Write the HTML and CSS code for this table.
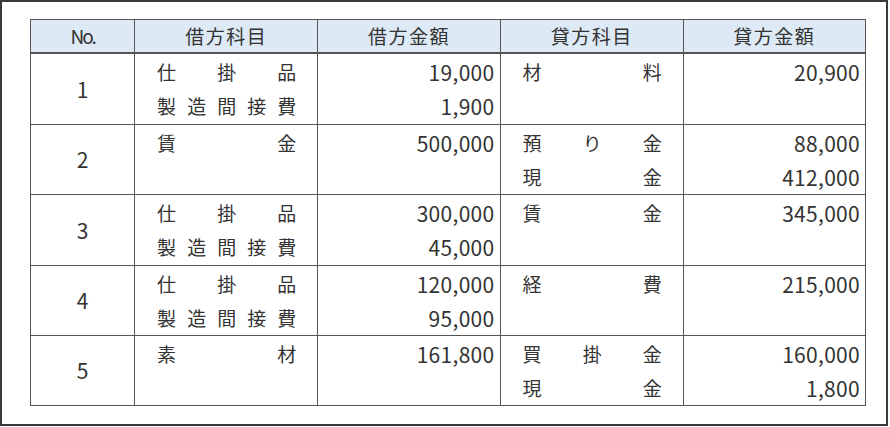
FILE: index.html
```html
<!DOCTYPE html>
<html lang="ja">
<head>
<meta charset="utf-8">
<link rel="stylesheet" href="styles.css">
</head>
<body>
<div class="frame">
  <table class="journal">
    <colgroup>
      <col class="c-no"><col class="c-acc"><col class="c-amt"><col class="c-acc"><col class="c-amt">
    </colgroup>
    <thead>
      <tr>
        <th class="no-head">No.</th>
        <th>借方科目</th>
        <th>借方金額</th>
        <th>貸方科目</th>
        <th>貸方金額</th>
      </tr>
    </thead>
    <tbody>
      <tr class="r1">
        <td class="no">1</td>
        <td class="acc"><div class="ln">仕掛品</div><div class="ln">製造間接費</div></td>
        <td class="amt"><div class="ln">19,000</div><div class="ln">1,900</div></td>
        <td class="acc"><div class="ln">材料</div></td>
        <td class="amt"><div class="ln">20,900</div></td>
      </tr>
      <tr>
        <td class="no">2</td>
        <td class="acc"><div class="ln">賃金</div></td>
        <td class="amt"><div class="ln">500,000</div></td>
        <td class="acc"><div class="ln">預り金</div><div class="ln">現金</div></td>
        <td class="amt"><div class="ln">88,000</div><div class="ln">412,000</div></td>
      </tr>
      <tr class="r1">
        <td class="no">3</td>
        <td class="acc"><div class="ln">仕掛品</div><div class="ln">製造間接費</div></td>
        <td class="amt"><div class="ln">300,000</div><div class="ln">45,000</div></td>
        <td class="acc"><div class="ln">賃金</div></td>
        <td class="amt"><div class="ln">345,000</div></td>
      </tr>
      <tr>
        <td class="no">4</td>
        <td class="acc"><div class="ln">仕掛品</div><div class="ln">製造間接費</div></td>
        <td class="amt"><div class="ln">120,000</div><div class="ln">95,000</div></td>
        <td class="acc"><div class="ln">経費</div></td>
        <td class="amt"><div class="ln">215,000</div></td>
      </tr>
      <tr>
        <td class="no">5</td>
        <td class="acc"><div class="ln">素材</div></td>
        <td class="amt"><div class="ln">161,800</div></td>
        <td class="acc"><div class="ln">買掛金</div><div class="ln">現金</div></td>
        <td class="amt"><div class="ln">160,000</div><div class="ln">1,800</div></td>
      </tr>
    </tbody>
  </table>
</div>
</body>
</html>
```
FILE: styles.css
```css
html, body {
  margin: 0;
  padding: 0;
  background: #ffffff;
}
.frame {
  box-sizing: border-box;
  width: 888px;
  height: 426px;
  border: 2px solid #383838;
  padding: 17px 0 0 28px;
  font-family: "Noto Sans CJK JP", "Noto Sans", sans-serif;
  color: #333333;
}
.journal {
  border-collapse: collapse;
  table-layout: fixed;
  width: 836px;
}
.c-no { width: 104px; }
.c-acc { width: 183px; }
.c-amt { width: 182px; }
.journal th,
.journal td {
  border: 1px solid #555555;
  padding: 0;
}
.journal th {
  background: #dde9f5;
  height: 32px;
  font-weight: 400;
  font-size: 19px;
  letter-spacing: 1.5px;
  text-align: center;
  vertical-align: middle;
  border-bottom: 2px solid #555555;
  line-height: 32px;
}
.journal th.no-head {
  letter-spacing: -2px;
  font-size: 19px;
}
.journal tbody tr {
  height: 70px;
}
.journal tbody tr.r1 {
  height: 71px;
}
.journal td {
  vertical-align: top;
  font-size: 19px;
}
.journal td.no {
  vertical-align: middle;
  text-align: center;
  font-size: 21px;
}
.ln {
  height: 34px;
  line-height: 36px;
}
.acc {
  padding-left: 22px !important;
  padding-right: 21px !important;
}
.acc .ln {
  text-align: justify;
  text-align-last: justify;
}
.amt {
  padding-right: 5px !important;
  text-align: right;
}
.amt .ln {
  font-size: 21px;
  letter-spacing: 0.3px;
}
```
